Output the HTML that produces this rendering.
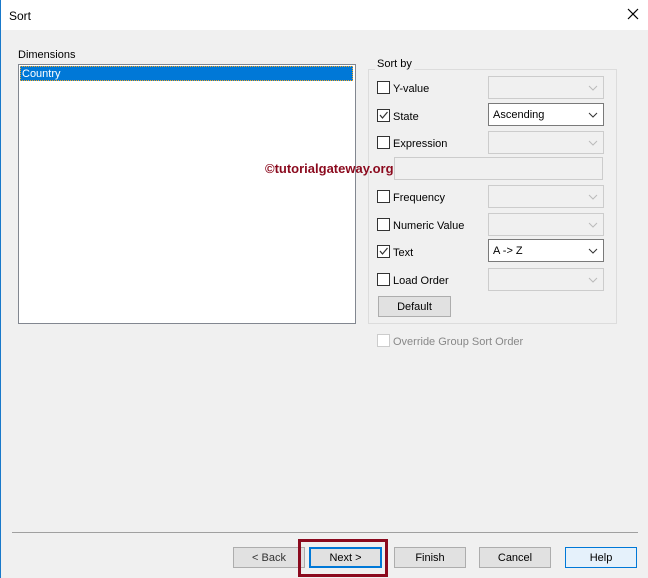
<!DOCTYPE html><html><head><style>
body{margin:0;width:648px;height:578px;background:#f0f0f0;font-family:"Liberation Sans",sans-serif;font-size:11px;color:#000;position:relative;overflow:hidden}
.a{position:absolute}
.cb{position:absolute;width:11px;height:11px;border:1px solid #333;background:#fff}
.lbl{position:absolute;font-size:11px;margin-top:2px}
.combo{position:absolute;left:488px;width:114px;height:21px;border:1px solid #ccc;background:#f0f0f0}
.combo.on{border-color:#7a7a7a;background:#fff}
.combo span{position:absolute;left:4px;top:5px}
.combo svg{position:absolute;right:5px;top:8px}
.btn{position:absolute;top:547px;height:19px;width:70px;border:1px solid #adadad;background:#e1e1e1;text-align:center;line-height:21px}
</style></head><body>
<div class="a" style="left:0;top:0;width:648px;height:30px;background:#fff"></div>
<div class="a" style="left:0;top:0;width:1px;height:578px;background:#1979ca"></div>
<div class="lbl" style="left:9px;top:7px;font-size:12px">Sort</div>
<svg class="a" style="left:627px;top:8px" width="12" height="12"><path d="M1 1L11 11M11 1L1 11" stroke="#000" stroke-width="1.2"/></svg>
<div class="lbl" style="left:18px;top:47px">Dimensions</div>
<div class="a" style="left:18px;top:64px;width:336px;height:258px;border:1px solid #828790;background:#fff"></div>
<div class="a" style="left:20px;top:66px;width:333px;height:15px;background:#0078d7;color:#fff;outline:1px dotted #f5a623;outline-offset:-1px"><span style="margin-left:2px;line-height:16px">Country</span></div>
<div class="a" style="left:368px;top:69px;width:247px;height:253px;border:1px solid #dcdcdc"></div>
<div class="lbl" style="left:375px;top:56px;background:#f0f0f0;padding:0 2px">Sort by</div>
<div class="cb" style="left:377px;top:81px"></div><div class="lbl" style="left:393px;top:81px">Y-value</div>
<div class="combo" style="top:76px"><svg width="10" height="6"><path d="M1 1L5 5L9 1" stroke="#bbb" fill="none"/></svg></div>
<div class="cb" style="left:377px;top:109px"></div><svg class="a" style="left:378px;top:110px" width="11" height="11"><path d="M2 5L4.5 8L9.5 2" stroke="#333" fill="none" stroke-width="1.2"/></svg><div class="lbl" style="left:393px;top:109px">State</div>
<div class="combo on" style="top:103px"><span>Ascending</span><svg width="10" height="6"><path d="M1 1L5 5L9 1" stroke="#333" fill="none"/></svg></div>
<div class="cb" style="left:377px;top:136px"></div><div class="lbl" style="left:393px;top:136px">Expression</div>
<div class="combo" style="top:131px"><svg width="10" height="6"><path d="M1 1L5 5L9 1" stroke="#bbb" fill="none"/></svg></div>
<div class="a" style="left:394px;top:157px;width:207px;height:21px;border:1px solid #ccc;background:#f0f0f0"></div>
<div class="cb" style="left:377px;top:190px"></div><div class="lbl" style="left:393px;top:190px">Frequency</div>
<div class="combo" style="top:185px"><svg width="10" height="6"><path d="M1 1L5 5L9 1" stroke="#bbb" fill="none"/></svg></div>
<div class="cb" style="left:377px;top:218px"></div><div class="lbl" style="left:393px;top:218px">Numeric Value</div>
<div class="combo" style="top:213px"><svg width="10" height="6"><path d="M1 1L5 5L9 1" stroke="#bbb" fill="none"/></svg></div>
<div class="cb" style="left:377px;top:245px"></div><svg class="a" style="left:378px;top:246px" width="11" height="11"><path d="M2 5L4.5 8L9.5 2" stroke="#333" fill="none" stroke-width="1.2"/></svg><div class="lbl" style="left:393px;top:245px">Text</div>
<div class="combo on" style="top:239px"><span>A -&gt; Z</span><svg width="10" height="6"><path d="M1 1L5 5L9 1" stroke="#333" fill="none"/></svg></div>
<div class="cb" style="left:377px;top:273px"></div><div class="lbl" style="left:393px;top:273px">Load Order</div>
<div class="combo" style="top:268px"><svg width="10" height="6"><path d="M1 1L5 5L9 1" stroke="#bbb" fill="none"/></svg></div>
<div class="btn" style="left:378px;top:296px;height:19px;width:71px">Default</div>
<div class="cb" style="left:377px;top:334px;border-color:#ccc"></div><div class="lbl" style="left:393px;top:334px;color:#888">Override Group Sort Order</div>
<div class="a" style="left:265px;top:161px;font-weight:bold;font-size:13px;color:#8b0a1e;z-index:5">©tutorialgateway.org</div>
<div class="a" style="left:12px;top:532px;width:626px;height:1px;background:#a0a0a0"></div>
<div class="btn" style="left:233px;color:#333">&lt; Back</div>
<div class="btn" style="left:309px;border:2px solid #0078d7;height:17px;width:69px;line-height:19px">Next &gt;</div>
<div class="btn" style="left:394px">Finish</div>
<div class="btn" style="left:479px">Cancel</div>
<div class="btn" style="left:565px;background:#e5f1fb;border-color:#0078d7">Help</div>
<div class="a" style="left:298px;top:539px;width:84px;height:32px;border:3px solid #8b0a1e"></div>
</body></html>
